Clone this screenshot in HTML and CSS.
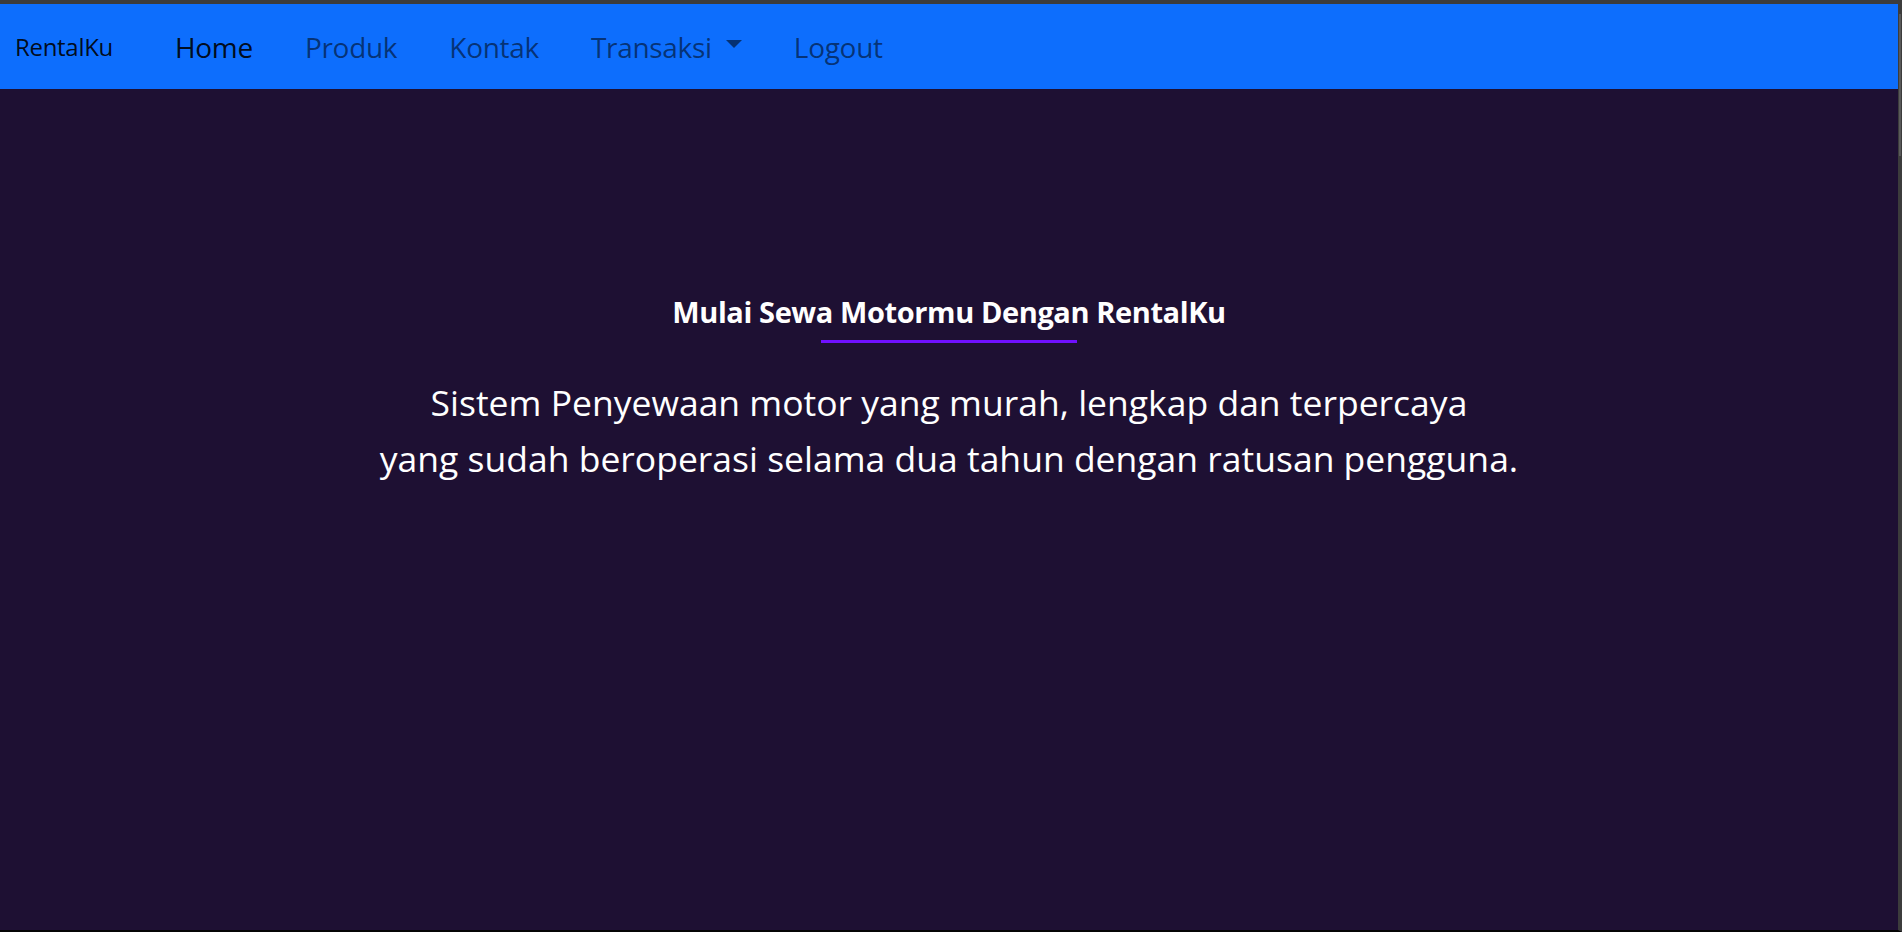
FILE: index.html
```html
<!DOCTYPE html>
<html lang="id">
<head>
<meta charset="utf-8">
<title>RentalKu</title>
<link rel="stylesheet" href="styles.css">
</head>
<body>
<div class="frame">
  <nav class="navbar">
    <a class="brand" href="#">RentalKu</a>
    <ul class="nav">
      <li><a class="nav-link active" href="#">Home</a></li>
      <li><a class="nav-link" href="#">Produk</a></li>
      <li><a class="nav-link" href="#">Kontak</a></li>
      <li><a class="nav-link dropdown" href="#">Transaksi <span class="caret"></span></a></li>
      <li><a class="nav-link" href="#">Logout</a></li>
    </ul>
  </nav>
  <main class="hero">
    <h2 class="title">Mulai Sewa Motormu Dengan RentalKu</h2>
    <div class="bar"></div>
    <p class="lead">Sistem Penyewaan motor yang murah, lengkap dan terpercaya<br>yang sudah beroperasi selama dua tahun dengan ratusan pengguna.</p>
  </main>
  <div class="scroll-thumb"></div>
</div>
</body>
</html>
```
FILE: styles.css
```css
* { box-sizing: border-box; }
html, body { margin: 0; padding: 0; height: 100%; }
body {
  background: #000;
  font-family: "Open Sans", "Noto Sans", sans-serif;
  overflow: hidden;
}
.frame {
  position: relative;
  height: 932px;
  border-top: 4px solid #3c3c3c;
  border-right: 4px solid #3c3c3c;
  border-bottom: 2px solid #050505;
  background: #1e1033;
  display: flex;
  flex-direction: column;
}
.navbar {
  height: 85px;
  background: #0d6efd;
  display: flex;
  align-items: center;
  padding-left: 15px;
}
.brand {
  font-size: 24px;
  color: rgba(0,0,0,.9);
  text-decoration: none;
  margin-right: 36px;
  letter-spacing: -0.3px;
}
.nav {
  list-style: none;
  margin: 0;
  padding: 0;
  display: flex;
  align-items: center;
}
.nav-link {
  display: flex;
  align-items: center;
  font-size: 28px;
  padding: 0 26px;
  color: rgba(0,0,0,.55);
  text-decoration: none;
  letter-spacing: -0.3px;
}
.nav-link.active { color: rgba(0,0,0,.9); }
.caret {
  display: inline-block;
  margin-left: 14px;
  width: 0;
  height: 0;
  border-left: 8px solid transparent;
  border-right: 8px solid transparent;
  border-top: 8px solid rgba(0,0,0,.55);
  margin-top: -6px;
}
.hero {
  flex: 1;
  display: flex;
  flex-direction: column;
  align-items: center;
  text-align: center;
  padding-top: 203px;
}
.title {
  margin: 0;
  color: #fff;
  font-size: 29px;
  font-weight: 700;
  line-height: 40px;
  letter-spacing: -0.4px;
}
.bar {
  width: 256px;
  height: 3px;
  background: #7010ff;
  margin-top: 8px;
}
.lead {
  margin: 31px 0 0;
  color: #fff;
  font-size: 35.5px;
  line-height: 56px;
  letter-spacing: 0;
}
.scroll-thumb {
  position: absolute;
  right: -3px;
  top: 10px;
  width: 2px;
  height: 142px;
  background: #5a5a5a;
}
```
